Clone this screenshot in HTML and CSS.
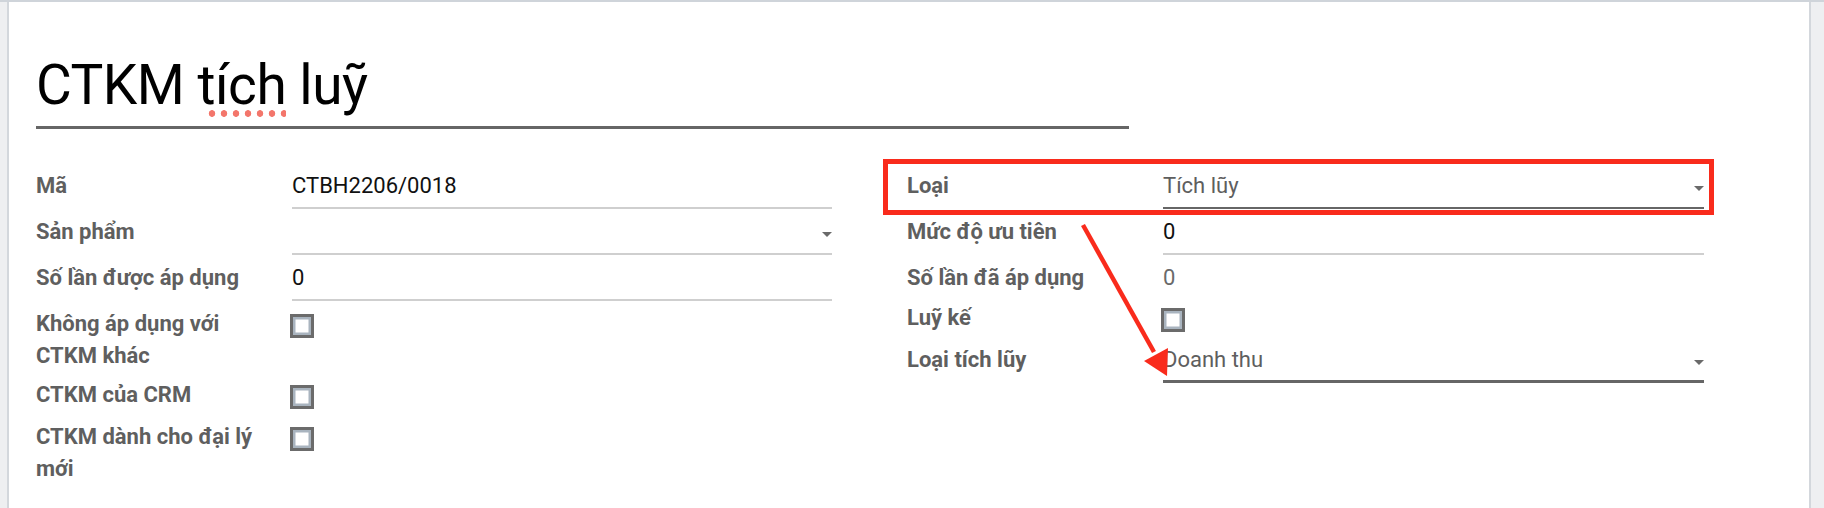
FILE: index.html
```html
<!DOCTYPE html>
<html lang="vi">
<head>
<meta charset="utf-8">
<title>CTKM tích luỹ</title>
<link rel="stylesheet" href="styles.css">
</head>
<body>
<div class="page">
  <div class="sheet">
    <div class="title"><span class="name">CTKM <span class="spell">tích</span> luỹ</span></div>
    <div class="groups">
      <div class="group">
        <div class="row">
          <div class="label">Mã</div>
          <div class="field input">CTBH2206/0018</div>
        </div>
        <div class="row">
          <div class="label">Sản phẩm</div>
          <div class="field input select"><span class="val"></span><i class="caret"></i></div>
        </div>
        <div class="row">
          <div class="label">Số lần được áp dụng</div>
          <div class="field input">0</div>
        </div>
        <div class="row">
          <div class="label">Không áp dụng với CTKM khác</div>
          <div class="field check"><span class="box"></span></div>
        </div>
        <div class="row">
          <div class="label">CTKM của CRM</div>
          <div class="field check"><span class="box"></span></div>
        </div>
        <div class="row">
          <div class="label">CTKM dành cho đại lý mới</div>
          <div class="field check"><span class="box"></span></div>
        </div>
      </div>
      <div class="group">
        <div class="row">
          <div class="label">Loại</div>
          <div class="field input select dark"><span class="val muted">Tích lũy</span><i class="caret"></i></div>
        </div>
        <div class="row">
          <div class="label">Mức độ ưu tiên</div>
          <div class="field input">0</div>
        </div>
        <div class="row">
          <div class="label">Số lần đã áp dụng</div>
          <div class="field readonly">0</div>
        </div>
        <div class="row">
          <div class="label">Luỹ kế</div>
          <div class="field check"><span class="box"></span></div>
        </div>
        <div class="row">
          <div class="label">Loại tích lũy</div>
          <div class="field input select dark thick"><span class="val muted">Doanh thu</span><i class="caret"></i></div>
        </div>
      </div>
    </div>
  </div>
  <svg class="annot" width="1824" height="508" viewBox="0 0 1824 508" xmlns="http://www.w3.org/2000/svg">
    <rect x="885.5" y="159.5" width="826" height="51" fill="none" stroke="#f92b1c" stroke-width="5"/>
    <line x1="1083" y1="223" x2="1154" y2="350" stroke="#f92b1c" stroke-width="4.5"/>
    <polygon points="1144,359 1168,346 1167,374" fill="#f92b1c"/>
  </svg>
</div>
</body>
</html>
```
FILE: styles.css
```css
html, body {
  margin: 0;
  padding: 0;
}
body {
  background: #eeeff1;
  font-family: Roboto, "Noto Sans", sans-serif;
  overflow: hidden;
}
.page {
  position: relative;
  height: 508px;
  border-top: 2px solid #cfd4da;
  box-sizing: border-box;
  padding: 0 13px 0 7px;
}
.sheet {
  background: #fff;
  border-left: 2px solid #d3d7dc;
  border-right: 2px solid #d3d7dc;
  height: 100%;
  box-sizing: border-box;
  padding: 51px 0 0 27px;
}
.title {
  width: 1093px;
  font-size: 55px;
  letter-spacing: -0.5px;
  line-height: 64px;
  color: #000;
  padding-bottom: 9px;
  border-bottom: 3px solid #666;
}
.spell {
  position: relative;
}
.spell::after {
  content: "";
  position: absolute;
  left: 8px;
  width: 80px;
  bottom: 0;
  height: 7px;
  background-image: radial-gradient(circle, #f3766b 0, #f3766b 3px, rgba(243,118,107,0) 3.6px);
  background-size: 12px 7px;
  background-repeat: repeat-x;
}
.groups {
  display: grid;
  grid-template-columns: 796px 797px;
  column-gap: 75px;
  margin-top: 41px;
}
.row {
  display: grid;
  grid-template-columns: 256px 1fr;
  margin-bottom: 7px;
  font-size: 22px;
  line-height: 32px;
}
.label {
  font-weight: bold;
  color: #5f5f5f;
  padding-right: 18px;
}
.field {
  color: #111;
}
.input {
  box-sizing: border-box;
  height: 39px;
  padding-bottom: 5px;
  border-bottom: 2px solid #cfcfcf;
}
.input.dark {
  border-bottom-color: #666;
}
.input.thick {
  border-bottom-width: 3px;
}
.select {
  display: flex;
  justify-content: space-between;
  align-items: flex-start;
}
.muted {
  color: #5e5e5e;
}
.caret {
  display: block;
  width: 0;
  height: 0;
  margin-top: 16px;
  border-left: 5px solid transparent;
  border-right: 5px solid transparent;
  border-top: 5px solid #6a6a6a;
}
.readonly {
  color: #6a6a6a;
  padding-bottom: 1px;
}
.check {
  height: 35px;
  box-sizing: border-box;
  padding-top: 6px;
}
.box {
  display: block;
  width: 24px;
  height: 24px;
  margin-left: -2px;
  box-sizing: border-box;
  border: 3px solid #6b6b6b;
  box-shadow: inset 0 0 0 2.5px #a9b4bf;
  background: #fff;
}
.annot {
  position: absolute;
  left: 0;
  top: 0;
  pointer-events: none;
}
```
